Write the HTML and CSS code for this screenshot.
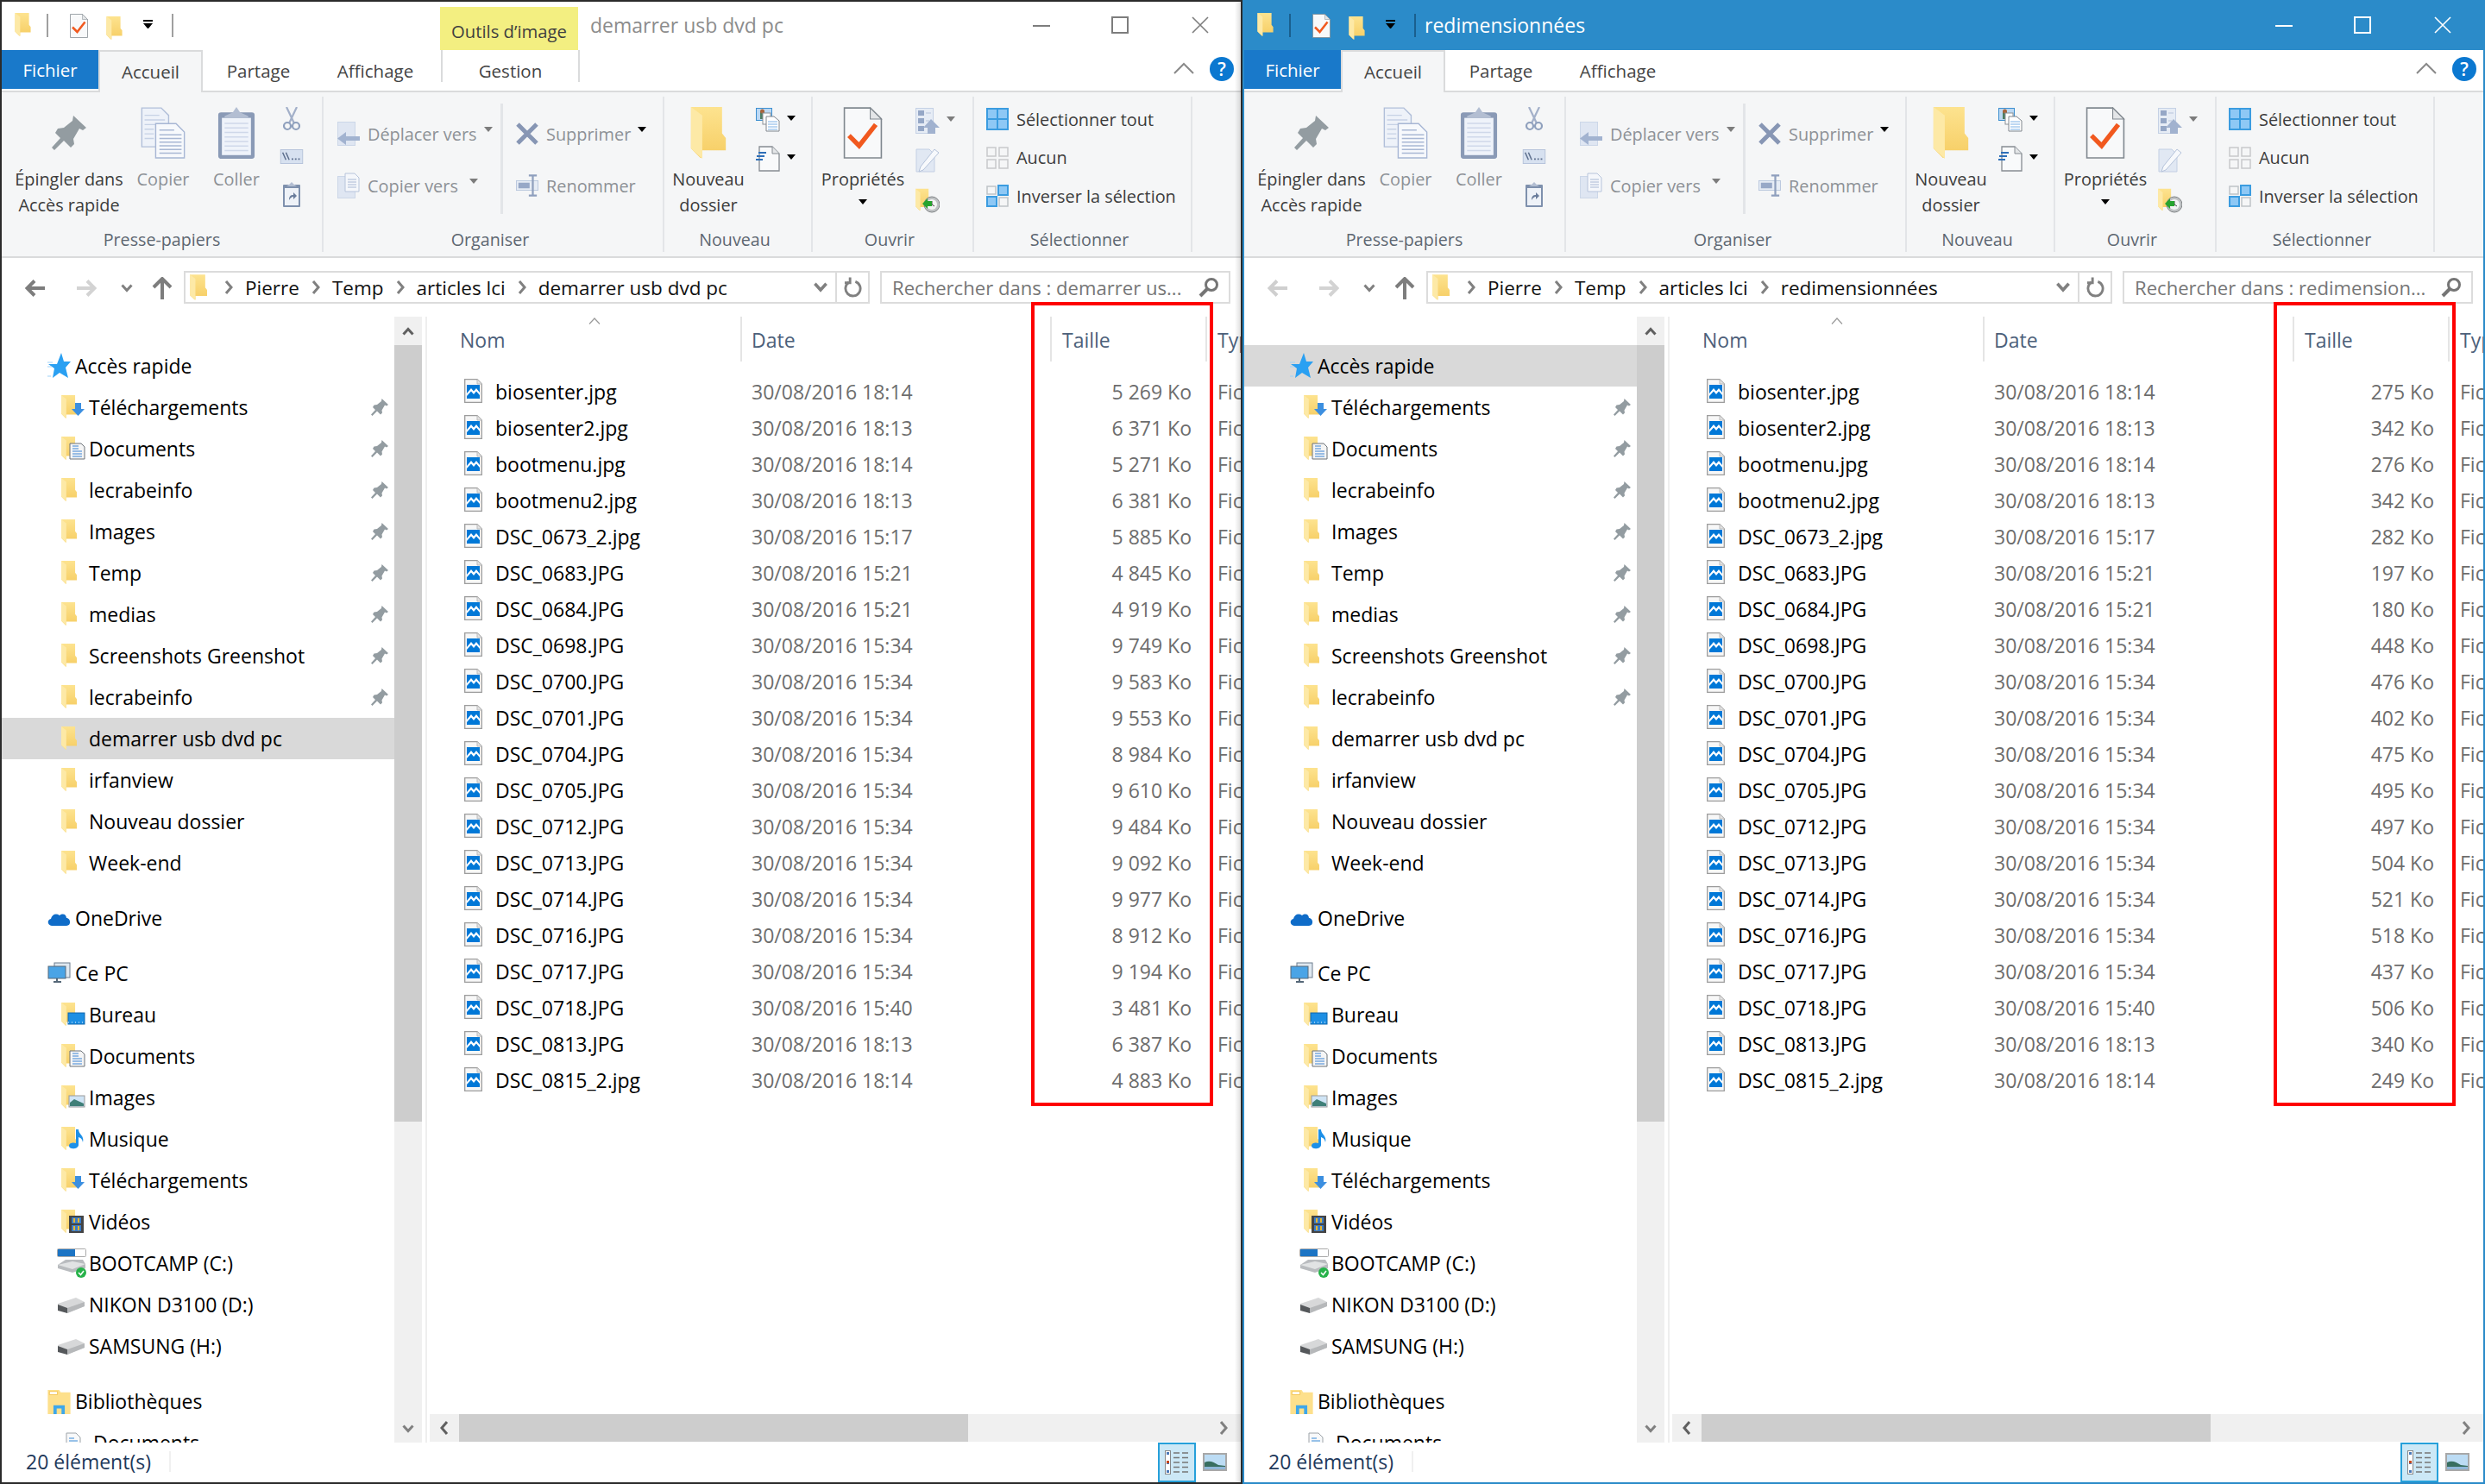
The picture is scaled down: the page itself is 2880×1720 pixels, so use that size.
FILE: index.html
```html
<!DOCTYPE html>
<html lang="fr">
<head>
<meta charset="utf-8">
<title>Explorateur</title>
<link rel="stylesheet" href="styles.css">
</head>
<body>
<svg class="defs" xmlns="http://www.w3.org/2000/svg">
<defs>
<linearGradient id="fg" x1="0" y1="0" x2="0" y2="1"><stop offset="0" stop-color="#fde38f"/><stop offset="1" stop-color="#f6cd63"/></linearGradient>
<symbol id="folder" viewBox="0 0 37 55"><path d="M0 0H33V28L37 33V46H12V54H10L0 44Z" fill="url(#fg)"/><path d="M0 0L12 9V55L0 44Z" fill="#fde9a6"/></symbol>
<symbol id="check" viewBox="0 0 42 56"><path d="M1 1H29L41 13V55H1Z" fill="#f8f9fa" stroke="#80888f" stroke-width="1.5"/><path d="M29 1V13H41Z" fill="#e4e6e8" stroke="#80888f"/><path d="M6 31L17 42L35 19" fill="none" stroke="#f1591f" stroke-width="5"/></symbol>
<symbol id="pin" viewBox="0 0 40 40"><path d="M25 0L40 14L36 17L32 15L25 27L26 33L22 37L14 29L3 40L0 37L10 26L4 20L7 15L14 14L24 6Z" fill="#939ca1"/></symbol>
<symbol id="copy" viewBox="0 0 48 56"><path d="M1 1H22L30 9V43H1Z" fill="#eef2f9" stroke="#b1bfd9" stroke-width="1.3"/><path d="M4 9H20M4 14H26M4 19H26M4 24H14M4 29H14M4 34H14" stroke="#c6d1e5" stroke-width="1.3"/><path d="M16 18H38L47 27V55H16Z" fill="#f7f9fc" stroke="#a7b6d4" stroke-width="1.3"/><path d="M20 25H36M20 30H44M20 34H44M20 38H44M20 42H44M20 46H44M20 50H44" stroke="#a9b8d4" stroke-width="1.4"/></symbol>
<symbol id="paste" viewBox="0 0 40 57"><rect x="0" y="6" width="40" height="51" rx="3" fill="#8a9ab6"/><rect x="4" y="12" width="32" height="41" fill="#eff3fa"/><path d="M7 18H33M7 23H33M7 28H33M7 33H33M7 38H33M7 43H33M7 48H33" stroke="#cfd8e9" stroke-width="1.3"/><path d="M20 0L24 6L33 10V12H7V10L16 6Z" fill="#b3bed2"/></symbol>
<symbol id="cut" viewBox="0 0 20 28"><path d="M4 0L13 19M16 0L7 19" stroke="#a3b0c9" stroke-width="2.2" fill="none"/><circle cx="5" cy="22" r="4" fill="none" stroke="#8fa0bd" stroke-width="2.2"/><circle cx="15" cy="22" r="4" fill="none" stroke="#8fa0bd" stroke-width="2.2"/></symbol>
<symbol id="cpath" viewBox="0 0 28 18"><rect x=".5" y=".5" width="27" height="17" fill="#d7e1f0" stroke="#b4c2da"/><path d="M3 4L7 13M7 4L11 13" stroke="#5d6f8d" stroke-width="1.6"/><path d="M14 12h2M18 12h2M22 12h2" stroke="#5d6f8d" stroke-width="2"/></symbol>
<symbol id="pshort" viewBox="0 0 20 29"><rect y="3" width="20" height="26" rx="1" fill="#7e90ad"/><rect x="2" y="7" width="16" height="20" fill="#eef2f8"/><path d="M10 0L13 3L16 5H4L7 3Z" fill="#b3bed2"/><path d="M7 21C7 16 9 15 12 15V12L16 16L12 20V17C10 17 9 18 7 21Z" fill="#6a7d9c"/></symbol>
<symbol id="move" viewBox="0 0 26 28"><rect x=".5" y=".5" width="20" height="27" fill="#dfe6f2" stroke="#ccd7e8"/><path d="M10 14V19H26V24H10V29L0 21.500Z" transform="translate(0 -2)" fill="#a2b3d0"/></symbol>
<symbol id="copyto" viewBox="0 0 26 30"><rect x=".5" y="4.500" width="20" height="25" fill="#dfe6f2" stroke="#ccd7e8"/><path d="M9 1H20L25 6V22H9Z" fill="#f5f7fb" stroke="#b7c4db"/><path d="M12 8H22M12 11H22M12 14H22M12 17H22" stroke="#a9b8d4"/></symbol>
<symbol id="x" viewBox="0 0 26 24"><path d="M2 1L24 23M24 1L2 23" stroke="#8796b4" stroke-width="5"/></symbol>
<symbol id="rename" viewBox="0 0 28 27"><rect x=".5" y="7.500" width="27" height="12" fill="#e6ecf5" stroke="#b8c6dd"/><rect x="3" y="10" width="14" height="7" fill="#97a8c7"/><path d="M21 2V25M16 1H26M16 26H26" stroke="#8f9fbd" stroke-width="2.400" fill="none"/></symbol>
<symbol id="newitem" viewBox="0 0 28 28"><rect x=".5" y=".5" width="18" height="14" fill="#bcd8f3" stroke="#3d8fd0"/><rect x="5" y="4" width="5" height="9" fill="#4c7d63"/><circle cx="7.500" cy="4" r="2.500" fill="#a9653c"/><rect x="8" y="6" width="9" height="13" fill="#fff" stroke="#8a8f96"/><path d="M12 10H21L27 15V27H12Z" fill="#fff" stroke="#80868d"/><path d="M14 16H25M14 19H25M14 22H25M14 25H25" stroke="#7db1e6"/></symbol>
<symbol id="easy" viewBox="0 0 28 30"><path d="M4 1H19L27 9V29H4Z" fill="#f9fafb" stroke="#868c92" stroke-width="1.300"/><path d="M19 1V9H27" fill="#e4e6e8" stroke="#868c92"/><path d="M3 8H12M1 12H10M0 16H8" stroke="#2e6fb8" stroke-width="1.800"/></symbol>
<symbol id="plist" viewBox="0 0 28 30"><rect x=".5" y=".5" width="20" height="29" fill="#e6ecf5" stroke="#c5d1e5"/><rect x="3" y="3" width="7" height="6" fill="#95a7c6"/><rect x="3" y="12" width="7" height="6" fill="#95a7c6"/><rect x="3" y="21" width="7" height="6" fill="#95a7c6"/><path d="M12 6H18M12 15H16" stroke="#b7c4db"/><path d="M18 13L28 23H23V30H14V23H9Z" fill="#a1b2cf"/></symbol>
<symbol id="edit" viewBox="0 0 28 28"><path d="M1 1H16L22 7V27H1Z" fill="#e1e8f3" stroke="#c3cfe3"/><path d="M22 1L27 5L9 25L4 27L6 21Z" fill="#f7f9fc" stroke="#b5c3da"/></symbol>
<symbol id="hist" viewBox="0 0 28 28"><use href="#folder" width="17" height="27"/><circle cx="19" cy="19" r="9" fill="#bfc2c4" stroke="#808486"/><circle cx="19" cy="19" r="6" fill="#f3f3f3"/><path d="M19 15V19L22 21" stroke="#444" fill="none"/><path d="M8 18L14 12V15H19V21H14V24Z" fill="#26a32e"/></symbol>
<symbol id="sall" viewBox="0 0 26 26"><rect x="1" y="1" width="24" height="24" fill="#8ec8f5" stroke="#3b9ce0" stroke-width="2"/><path d="M13 1V25M1 13H25" stroke="#3b9ce0" stroke-width="2"/></symbol>
<symbol id="snone" viewBox="0 0 26 26"><path d="M1 1H11V11H1ZM15 1H25V11H15ZM1 15H11V25H1ZM15 15H25V25H15Z" fill="#f5f6f7" stroke="#c7c9cb" stroke-width="1.500"/></symbol>
<symbol id="sinv" viewBox="0 0 26 26"><path d="M1 2H11V11H1ZM15 15H25V25H15Z" fill="#f5f6f7" stroke="#bfc3c7" stroke-width="1.500"/><path d="M14 1H25V12H14ZM1 14H12V25H1Z" fill="#8ec8f5" stroke="#3b9ce0" stroke-width="2"/></symbol>
<symbol id="star" viewBox="0 0 27 30"><path d="M16 0L19 10L27 10L21 17L24 29L14 23L6 29L8 18L1 13H11Z" fill="#2aa0f2"/><path d="M0 11H6M0 16H5M0 27H4" stroke="#9fd2f7"/></symbol>
<symbol id="dl" viewBox="0 0 28 28"><use href="#folder" width="18" height="27"/><path d="M12 16H16V9H23V16H27L19.500 24Z" fill="#3c8fe0"/></symbol>
<symbol id="docs" viewBox="0 0 28 28"><use href="#folder" width="18" height="27"/><path d="M10 8H23L27 12V26H10Z" fill="#f5f5f5" stroke="#6d7278"/><path d="M13 11H20M13 14H20M13 17H24M13 20H24M13 23H24" stroke="#3b83d4"/></symbol>
<symbol id="fold" viewBox="0 0 28 28"><use href="#folder" width="18" height="27"/></symbol>
<symbol id="desk" viewBox="0 0 28 28"><use href="#folder" width="18" height="27"/><rect x="8" y="12" width="19" height="13" fill="#1d8fe4" stroke="#0f67ad"/><path d="M8 23H27" stroke="#fff" stroke-dasharray="1 3"/></symbol>
<symbol id="pics" viewBox="0 0 28 28"><use href="#folder" width="18" height="27"/><rect x="9" y="12" width="18" height="13" fill="#cfe4f5" stroke="#999"/><path d="M10 20L15 16L26 21V24H10Z" fill="#3f7f78"/></symbol>
<symbol id="music" viewBox="0 0 28 28"><use href="#folder" width="18" height="27"/><path d="M17 3H20C20 9 27 10 25 18C24 13 22 13 20 12V21C20 26 9 27 9 22C9 18 15 18 17 19Z" fill="#1d90e8"/></symbol>
<symbol id="vid" viewBox="0 0 28 28"><use href="#folder" width="18" height="27"/><rect x="9" y="7" width="17" height="20" fill="#444"/><rect x="12" y="9" width="11" height="7" fill="#3a7bc6"/><rect x="12" y="18" width="11" height="7" fill="#3a7bc6"/><path d="M15 10V15M20 10V15M15 19V24M20 19V24" stroke="#e6b530" stroke-width="2"/></symbol>
<symbol id="cdrv" viewBox="0 0 34 34"><rect x=".5" y=".5" width="33" height="9" rx="1" fill="#fff" stroke="#aaa"/><rect x="1" y="1" width="20" height="8" fill="#1c74c4"/><path d="M1 19L10 13H30L33 18V23L18 28L1 23Z" fill="#b9bcbf"/><path d="M1 19L18 24L33 18L18 15Z" fill="#e1e3e4"/><circle cx="28" cy="28" r="6" fill="#27b24a"/><path d="M25 28L27.500 30.500L31 26" stroke="#fff" stroke-width="1.500" fill="none"/></symbol>
<symbol id="usb" viewBox="0 0 34 34"><path d="M1 16L22 9L32 14V19L12 27L1 22Z" fill="#d7d8d9"/><path d="M1 17V24L12 27V21Z" fill="#55585b"/><path d="M12 21L32 14V19L12 27Z" fill="#b6b8ba"/></symbol>
<symbol id="cloud" viewBox="0 0 27 18"><path d="M5 18C0 18-1 11 4 10C5 5 10 3 14 6C18 3 22 5 22 9C27 9 28 18 22 18Z" fill="#0f6cc8"/></symbol>
<symbol id="pc" viewBox="0 0 27 26"><rect x="8" y="1" width="18" height="17" fill="#dfe8f0" stroke="#6d7d8e"/><rect x="1" y="5" width="20" height="14" fill="#4aa4e6" stroke="#566878"/><path d="M7 23H16M11 19V23" stroke="#566878" stroke-width="2"/></symbol>
<symbol id="lib" viewBox="0 0 28 32"><path d="M0 2H14L16 5H28V32H0Z" fill="#fde08c"/><path d="M2 4H12V8H2Z" fill="#fff" stroke="#f3c34f"/><path d="M7 32V21H21V32H17V25H11V32Z" fill="#3ea7ea"/></symbol>
<symbol id="doc2" viewBox="0 0 18 24"><path d="M1 1H12L17 6V23H1Z" fill="#f8f9fa" stroke="#9da3a8"/><path d="M4 7H10M4 10H14M4 13H14M4 16H14" stroke="#3b8bd8"/></symbol>
<symbol id="img" viewBox="0 0 21 28"><path d="M.7.7H15L20.300 6V27.300H.7Z" fill="#f7f7f7" stroke="#9c9c9c" stroke-width="1.300"/><path d="M15 .7V6H20.300" fill="#e3e3e3" stroke="#bcbcbc"/><rect x="3" y="7" width="15" height="16" fill="#0078d7"/><path d="M3 17L8 11L11 14.500L14 11L18 16V19L14 14.500L11 18L8 14.500L3 20Z" fill="#fff"/></symbol>
<symbol id="back" viewBox="0 0 24 20"><path d="M23 10H3M11 1.500L2.500 10L11 18.500" fill="none" stroke="currentColor" stroke-width="4"/></symbol>
<symbol id="fwd" viewBox="0 0 24 20"><path d="M1 10H21M13 1.500L21.500 10L13 18.500" fill="none" stroke="currentColor" stroke-width="4"/></symbol>
<symbol id="up" viewBox="0 0 24 26"><path d="M12 26V3M2 12L12 2L22 12" fill="none" stroke="#7d7d7d" stroke-width="4"/></symbol>
<symbol id="chd" viewBox="0 0 14 10"><path d="M1.500 1.500L7 7.500L12.500 1.500" fill="none" stroke="#808080" stroke-width="3"/></symbol>
<symbol id="chr" viewBox="0 0 10 18"><path d="M2 2L8 9L2 16" fill="none" stroke="#808080" stroke-width="3"/></symbol>
<symbol id="chl" viewBox="0 0 10 18"><path d="M8 2L2 9L8 16" fill="none" stroke="#606060" stroke-width="3"/></symbol>
<symbol id="chu" viewBox="0 0 14 10"><path d="M1.500 8.500L7 2.500L12.500 8.500" fill="none" stroke="#606060" stroke-width="3"/></symbol>
<symbol id="ref" viewBox="0 0 22 24"><path d="M6 6A9 9 0 1 0 14 5" fill="none" stroke="#808080" stroke-width="3"/><path d="M6 0H9V8H1V5H6Z" fill="#808080"/></symbol>
<symbol id="mag" viewBox="0 0 24 24"><circle cx="15" cy="9" r="6.500" fill="none" stroke="#757575" stroke-width="3"/><path d="M10 14L2 22" stroke="#757575" stroke-width="4"/></symbol>
<symbol id="caret" viewBox="0 0 14 8"><path d="M1 7.500L7 1L13 7.500" fill="none" stroke="#9a9a9a" stroke-width="1.200"/></symbol>
<symbol id="vdet" viewBox="0 0 28 28"><rect x=".5" y=".5" width="6" height="27" fill="#fff" stroke="#888"/><path d="M10 3H17M20 3H27M10 8.500H17M20 8.500H27M10 14H17M20 14H27M10 19.500H17M20 19.500H27M10 25H17M20 25H27" stroke="#767676" stroke-width="1.300"/><path d="M2 2h3v3h-3zM2 13h3v3h-3zM2 23h3v3h-3z" fill="#4a78b8"/><path d="M2 12h3v3h-3z" fill="#c5461c"/></symbol>
<symbol id="vthumb" viewBox="0 0 28 21"><rect x="1" y="1" width="26" height="19" fill="#bcdcf4" stroke="#a8a8a8" stroke-width="2"/><path d="M2 11C8 8 13 11 18 14L26 15V17H2Z" fill="#386e60"/><rect x="2" y="16" width="24" height="3" fill="#8fb7d8"/></symbol>
</defs>
</svg>

<div class="screen">
<section class="win win-a">
  <header class="title">
    <svg class="q-f q-f1"><use href="#folder"/></svg><i class="q-sep"></i>
    <svg class="q-c"><use href="#check"/></svg>
    <svg class="q-f q-f2"><use href="#folder"/></svg>
    <span class="q-dd"></span><i class="q-sep q-sep2"></i>
    <div class="ctx">Outils d’image</div>
    <span class="cap">demarrer usb dvd pc</span>
    <div class="wbtns"><i class="w-min"></i><i class="w-max"></i><svg class="w-x" viewBox="0 0 20 20"><path d="M1 1L19 19M19 1L1 19" stroke="currentColor" stroke-width="1.600"/></svg></div>
  </header>
  <nav class="tabs">
    <span class="tab t-file">Fichier</span><span class="tab t-home">Accueil</span><span class="tab t-share">Partage</span><span class="tab t-view">Affichage</span>
    <span class="tab t-gest">Gestion</span>
    <svg class="collapse" viewBox="0 0 24 14"><path d="M1 13L12 2L23 13" fill="none" stroke="#8a8a8a" stroke-width="2"/></svg><span class="help">?</span>
  </nav>
  <div class="ribbon">
    <div class="grp g1"><div class="gbody">
      <div class="big b-pin"><svg class="bi"><use href="#pin" y="10" height="40"/></svg><span>Épingler dans</span><span>Accès rapide</span></div>
      <div class="big b-copy off"><svg class="bi"><use href="#copy"/></svg><span>Copier</span></div>
      <div class="big b-paste off"><svg class="bi"><use href="#paste"/></svg><span>Coller</span></div>
      <div class="smallc"><svg class="s-cut"><use href="#cut"/></svg><svg class="s-path"><use href="#cpath"/></svg><svg class="s-short"><use href="#pshort"/></svg></div>
    </div><div class="glabel">Presse-papiers</div></div>
    <div class="grp g2"><div class="gbody">
      <div class="org org-l">
        <div class="orow off"><svg class="oi"><use href="#move"/></svg><span>Déplacer vers</span><i class="arr grey"></i></div>
        <div class="orow off"><svg class="oi"><use href="#copyto"/></svg><span>Copier vers</span><i class="arr grey a-wide"></i></div>
      </div>
      <div class="org org-r">
        <div class="orow off"><svg class="oi"><use href="#x"/></svg><span>Supprimer</span><i class="arr"></i></div>
        <div class="orow off"><svg class="oi"><use href="#rename"/></svg><span>Renommer</span></div>
      </div>
    </div><div class="glabel lp">Organiser</div></div>
    <div class="grp g3"><div class="gbody">
      <div class="big b-new"><svg class="bi"><use href="#folder"/></svg><span>Nouveau</span><span>dossier</span></div>
      <div class="newc"><div class="nrow"><svg class="ni"><use href="#newitem"/></svg><i class="arr"></i></div><div class="nrow"><svg class="ni"><use href="#easy"/></svg><i class="arr"></i></div></div>
    </div><div class="glabel lp">Nouveau</div></div>
    <div class="grp g4"><div class="gbody">
      <div class="big b-prop"><svg class="bi"><use href="#check"/></svg><span>Propriétés</span><i class="arr prop-arr"></i></div>
      <div class="openc"><div class="nrow"><svg class="ni"><use href="#plist"/></svg><i class="arr grey"></i></div><div class="nrow"><svg class="ni"><use href="#edit"/></svg></div><div class="nrow"><svg class="ni"><use href="#hist"/></svg></div></div>
    </div><div class="glabel lp">Ouvrir</div></div>
    <div class="grp g5"><div class="gbody">
      <div class="selc"><div class="srow"><svg class="si"><use href="#sall"/></svg><span>Sélectionner tout</span></div><div class="srow"><svg class="si"><use href="#snone"/></svg><span>Aucun</span></div><div class="srow"><svg class="si"><use href="#sinv"/></svg><span>Inverser la sélection</span></div></div>
    </div><div class="glabel lp">Sélectionner</div></div>
  </div>
  <div class="addr">
    <svg class="n-back"><use href="#back"/></svg><svg class="n-fwd"><use href="#fwd"/></svg><svg class="n-dd"><use href="#chd"/></svg><svg class="n-up"><use href="#up"/></svg>
    <div class="abox">
      <svg class="a-f"><use href="#folder"/></svg><svg class="a-c"><use href="#chr"/></svg><span>Pierre</span><svg class="a-c"><use href="#chr"/></svg><span>Temp</span><svg class="a-c"><use href="#chr"/></svg><span>articles lci</span><svg class="a-c"><use href="#chr"/></svg><span>demarrer usb dvd pc</span>
      <svg class="a-dd"><use href="#chd"/></svg><div class="a-ref"><svg><use href="#ref"/></svg></div>
    </div>
    <div class="sbox"><span>Rechercher dans : demarrer us...</span><svg><use href="#mag"/></svg></div>
  </div>
  <div class="main">
    <aside class="navp">
      <div class="ni1"><svg class="ic1"><use href="#star"/></svg>Accès rapide</div>
      <div class="ni2"><svg class="ic2"><use href="#dl"/></svg>Téléchargements<svg class="pn"><use href="#pin"/></svg></div>
      <div class="ni2"><svg class="ic2"><use href="#docs"/></svg>Documents<svg class="pn"><use href="#pin"/></svg></div>
      <div class="ni2"><svg class="ic2"><use href="#fold"/></svg>lecrabeinfo<svg class="pn"><use href="#pin"/></svg></div>
      <div class="ni2"><svg class="ic2"><use href="#fold"/></svg>Images<svg class="pn"><use href="#pin"/></svg></div>
      <div class="ni2"><svg class="ic2"><use href="#fold"/></svg>Temp<svg class="pn"><use href="#pin"/></svg></div>
      <div class="ni2"><svg class="ic2"><use href="#fold"/></svg>medias<svg class="pn"><use href="#pin"/></svg></div>
      <div class="ni2"><svg class="ic2"><use href="#fold"/></svg>Screenshots Greenshot<svg class="pn"><use href="#pin"/></svg></div>
      <div class="ni2"><svg class="ic2"><use href="#fold"/></svg>lecrabeinfo<svg class="pn"><use href="#pin"/></svg></div>
      <div class="ni2 sel"><svg class="ic2"><use href="#fold"/></svg>demarrer usb dvd pc</div>
      <div class="ni2"><svg class="ic2"><use href="#fold"/></svg>irfanview</div>
      <div class="ni2"><svg class="ic2"><use href="#fold"/></svg>Nouveau dossier</div>
      <div class="ni2"><svg class="ic2"><use href="#fold"/></svg>Week-end</div>
      <div class="ni1 top"><svg class="ic1 ic-cloud"><use href="#cloud"/></svg>OneDrive</div>
      <div class="ni1 top"><svg class="ic1"><use href="#pc"/></svg>Ce PC</div>
      <div class="ni2"><svg class="ic2"><use href="#desk"/></svg>Bureau</div>
      <div class="ni2"><svg class="ic2"><use href="#docs"/></svg>Documents</div>
      <div class="ni2"><svg class="ic2"><use href="#pics"/></svg>Images</div>
      <div class="ni2"><svg class="ic2"><use href="#music"/></svg>Musique</div>
      <div class="ni2"><svg class="ic2"><use href="#dl"/></svg>Téléchargements</div>
      <div class="ni2"><svg class="ic2"><use href="#vid"/></svg>Vidéos</div>
      <div class="ni2"><svg class="ic3"><use href="#cdrv"/></svg>BOOTCAMP (C:)</div>
      <div class="ni2"><svg class="ic3"><use href="#usb"/></svg>NIKON D3100 (D:)</div>
      <div class="ni2"><svg class="ic3"><use href="#usb"/></svg>SAMSUNG (H:)</div>
      <div class="ni1 top"><svg class="ic1"><use href="#lib"/></svg>Bibliothèques</div>
      <div class="ni2"><svg class="ic2 ic-d"><use href="#doc2"/></svg>Documents</div>
    </aside>
    <div class="vsb"><div class="sb-btn"><svg><use href="#chu"/></svg></div><div class="sb-thumb"></div><div class="sb-rest"></div><div class="sb-btn"><svg><use href="#chd"/></svg></div></div>
    <div class="files">
      <div class="fhead"><div class="hc hc-n">Nom<svg class="sort"><use href="#caret"/></svg></div><div class="hc hc-d">Date</div><div class="hc hc-s">Taille</div><div class="hc hc-t">Type</div></div>
      <div class="flist">
        <div class="fr"><div class="fn"><svg><use href="#img"/></svg>biosenter.jpg</div><div class="fd">30/08/2016 18:14</div><div class="fs">5 269 Ko</div><div class="ft">Fichier JPG</div></div>
        <div class="fr"><div class="fn"><svg><use href="#img"/></svg>biosenter2.jpg</div><div class="fd">30/08/2016 18:13</div><div class="fs">6 371 Ko</div><div class="ft">Fichier JPG</div></div>
        <div class="fr"><div class="fn"><svg><use href="#img"/></svg>bootmenu.jpg</div><div class="fd">30/08/2016 18:14</div><div class="fs">5 271 Ko</div><div class="ft">Fichier JPG</div></div>
        <div class="fr"><div class="fn"><svg><use href="#img"/></svg>bootmenu2.jpg</div><div class="fd">30/08/2016 18:13</div><div class="fs">6 381 Ko</div><div class="ft">Fichier JPG</div></div>
        <div class="fr"><div class="fn"><svg><use href="#img"/></svg>DSC_0673_2.jpg</div><div class="fd">30/08/2016 15:17</div><div class="fs">5 885 Ko</div><div class="ft">Fichier JPG</div></div>
        <div class="fr"><div class="fn"><svg><use href="#img"/></svg>DSC_0683.JPG</div><div class="fd">30/08/2016 15:21</div><div class="fs">4 845 Ko</div><div class="ft">Fichier JPG</div></div>
        <div class="fr"><div class="fn"><svg><use href="#img"/></svg>DSC_0684.JPG</div><div class="fd">30/08/2016 15:21</div><div class="fs">4 919 Ko</div><div class="ft">Fichier JPG</div></div>
        <div class="fr"><div class="fn"><svg><use href="#img"/></svg>DSC_0698.JPG</div><div class="fd">30/08/2016 15:34</div><div class="fs">9 749 Ko</div><div class="ft">Fichier JPG</div></div>
        <div class="fr"><div class="fn"><svg><use href="#img"/></svg>DSC_0700.JPG</div><div class="fd">30/08/2016 15:34</div><div class="fs">9 583 Ko</div><div class="ft">Fichier JPG</div></div>
        <div class="fr"><div class="fn"><svg><use href="#img"/></svg>DSC_0701.JPG</div><div class="fd">30/08/2016 15:34</div><div class="fs">9 553 Ko</div><div class="ft">Fichier JPG</div></div>
        <div class="fr"><div class="fn"><svg><use href="#img"/></svg>DSC_0704.JPG</div><div class="fd">30/08/2016 15:34</div><div class="fs">8 984 Ko</div><div class="ft">Fichier JPG</div></div>
        <div class="fr"><div class="fn"><svg><use href="#img"/></svg>DSC_0705.JPG</div><div class="fd">30/08/2016 15:34</div><div class="fs">9 610 Ko</div><div class="ft">Fichier JPG</div></div>
        <div class="fr"><div class="fn"><svg><use href="#img"/></svg>DSC_0712.JPG</div><div class="fd">30/08/2016 15:34</div><div class="fs">9 484 Ko</div><div class="ft">Fichier JPG</div></div>
        <div class="fr"><div class="fn"><svg><use href="#img"/></svg>DSC_0713.JPG</div><div class="fd">30/08/2016 15:34</div><div class="fs">9 092 Ko</div><div class="ft">Fichier JPG</div></div>
        <div class="fr"><div class="fn"><svg><use href="#img"/></svg>DSC_0714.JPG</div><div class="fd">30/08/2016 15:34</div><div class="fs">9 977 Ko</div><div class="ft">Fichier JPG</div></div>
        <div class="fr"><div class="fn"><svg><use href="#img"/></svg>DSC_0716.JPG</div><div class="fd">30/08/2016 15:34</div><div class="fs">8 912 Ko</div><div class="ft">Fichier JPG</div></div>
        <div class="fr"><div class="fn"><svg><use href="#img"/></svg>DSC_0717.JPG</div><div class="fd">30/08/2016 15:34</div><div class="fs">9 194 Ko</div><div class="ft">Fichier JPG</div></div>
        <div class="fr"><div class="fn"><svg><use href="#img"/></svg>DSC_0718.JPG</div><div class="fd">30/08/2016 15:40</div><div class="fs">3 481 Ko</div><div class="ft">Fichier JPG</div></div>
        <div class="fr"><div class="fn"><svg><use href="#img"/></svg>DSC_0813.JPG</div><div class="fd">30/08/2016 18:13</div><div class="fs">6 387 Ko</div><div class="ft">Fichier JPG</div></div>
        <div class="fr"><div class="fn"><svg><use href="#img"/></svg>DSC_0815_2.jpg</div><div class="fd">30/08/2016 18:14</div><div class="fs">4 883 Ko</div><div class="ft">Fichier JPG</div></div>
      </div>
      <div class="hsb"><div class="hb"><svg><use href="#chl"/></svg></div><div class="h-thumb"></div><div class="hb hb-r"><svg><use href="#chr"/></svg></div></div>
    </div>
  </div>
  <footer class="status"><span class="count">20 élément(s)</span><i class="st-sep"></i><div class="vbtn on"><svg><use href="#vdet"/></svg></div><div class="vbtn v2"><svg class="vt"><use href="#vthumb"/></svg></div></footer>
  <div class="redbox"></div>
</section>

<section class="win win-b">
  <header class="title">
    <svg class="q-f q-f1"><use href="#folder"/></svg><i class="q-sep"></i>
    <svg class="q-c"><use href="#check"/></svg>
    <svg class="q-f q-f2"><use href="#folder"/></svg>
    <span class="q-dd"></span><i class="q-sep q-sep2"></i>
    <span class="cap">redimensionnées</span>
    <div class="wbtns"><i class="w-min"></i><i class="w-max"></i><svg class="w-x" viewBox="0 0 20 20"><path d="M1 1L19 19M19 1L1 19" stroke="currentColor" stroke-width="1.600"/></svg></div>
  </header>
  <nav class="tabs">
    <span class="tab t-file">Fichier</span><span class="tab t-home">Accueil</span><span class="tab t-share">Partage</span><span class="tab t-view">Affichage</span>
    <svg class="collapse" viewBox="0 0 24 14"><path d="M1 13L12 2L23 13" fill="none" stroke="#8a8a8a" stroke-width="2"/></svg><span class="help">?</span>
  </nav>
  <div class="ribbon">
    <div class="grp g1"><div class="gbody">
      <div class="big b-pin"><svg class="bi"><use href="#pin" y="10" height="40"/></svg><span>Épingler dans</span><span>Accès rapide</span></div>
      <div class="big b-copy off"><svg class="bi"><use href="#copy"/></svg><span>Copier</span></div>
      <div class="big b-paste off"><svg class="bi"><use href="#paste"/></svg><span>Coller</span></div>
      <div class="smallc"><svg class="s-cut"><use href="#cut"/></svg><svg class="s-path"><use href="#cpath"/></svg><svg class="s-short"><use href="#pshort"/></svg></div>
    </div><div class="glabel">Presse-papiers</div></div>
    <div class="grp g2"><div class="gbody">
      <div class="org org-l">
        <div class="orow off"><svg class="oi"><use href="#move"/></svg><span>Déplacer vers</span><i class="arr grey"></i></div>
        <div class="orow off"><svg class="oi"><use href="#copyto"/></svg><span>Copier vers</span><i class="arr grey a-wide"></i></div>
      </div>
      <div class="org org-r">
        <div class="orow off"><svg class="oi"><use href="#x"/></svg><span>Supprimer</span><i class="arr"></i></div>
        <div class="orow off"><svg class="oi"><use href="#rename"/></svg><span>Renommer</span></div>
      </div>
    </div><div class="glabel lp">Organiser</div></div>
    <div class="grp g3"><div class="gbody">
      <div class="big b-new"><svg class="bi"><use href="#folder"/></svg><span>Nouveau</span><span>dossier</span></div>
      <div class="newc"><div class="nrow"><svg class="ni"><use href="#newitem"/></svg><i class="arr"></i></div><div class="nrow"><svg class="ni"><use href="#easy"/></svg><i class="arr"></i></div></div>
    </div><div class="glabel lp">Nouveau</div></div>
    <div class="grp g4"><div class="gbody">
      <div class="big b-prop"><svg class="bi"><use href="#check"/></svg><span>Propriétés</span><i class="arr prop-arr"></i></div>
      <div class="openc"><div class="nrow"><svg class="ni"><use href="#plist"/></svg><i class="arr grey"></i></div><div class="nrow"><svg class="ni"><use href="#edit"/></svg></div><div class="nrow"><svg class="ni"><use href="#hist"/></svg></div></div>
    </div><div class="glabel lp">Ouvrir</div></div>
    <div class="grp g5"><div class="gbody">
      <div class="selc"><div class="srow"><svg class="si"><use href="#sall"/></svg><span>Sélectionner tout</span></div><div class="srow"><svg class="si"><use href="#snone"/></svg><span>Aucun</span></div><div class="srow"><svg class="si"><use href="#sinv"/></svg><span>Inverser la sélection</span></div></div>
    </div><div class="glabel lp">Sélectionner</div></div>
  </div>
  <div class="addr">
    <svg class="n-back"><use href="#back"/></svg><svg class="n-fwd"><use href="#fwd"/></svg><svg class="n-dd"><use href="#chd"/></svg><svg class="n-up"><use href="#up"/></svg>
    <div class="abox">
      <svg class="a-f"><use href="#folder"/></svg><svg class="a-c"><use href="#chr"/></svg><span>Pierre</span><svg class="a-c"><use href="#chr"/></svg><span>Temp</span><svg class="a-c"><use href="#chr"/></svg><span>articles lci</span><svg class="a-c"><use href="#chr"/></svg><span>redimensionnées</span>
      <svg class="a-dd"><use href="#chd"/></svg><div class="a-ref"><svg><use href="#ref"/></svg></div>
    </div>
    <div class="sbox"><span>Rechercher dans : redimension...</span><svg><use href="#mag"/></svg></div>
  </div>
  <div class="main">
    <aside class="navp">
      <div class="ni1 sel"><svg class="ic1"><use href="#star"/></svg>Accès rapide</div>
      <div class="ni2"><svg class="ic2"><use href="#dl"/></svg>Téléchargements<svg class="pn"><use href="#pin"/></svg></div>
      <div class="ni2"><svg class="ic2"><use href="#docs"/></svg>Documents<svg class="pn"><use href="#pin"/></svg></div>
      <div class="ni2"><svg class="ic2"><use href="#fold"/></svg>lecrabeinfo<svg class="pn"><use href="#pin"/></svg></div>
      <div class="ni2"><svg class="ic2"><use href="#fold"/></svg>Images<svg class="pn"><use href="#pin"/></svg></div>
      <div class="ni2"><svg class="ic2"><use href="#fold"/></svg>Temp<svg class="pn"><use href="#pin"/></svg></div>
      <div class="ni2"><svg class="ic2"><use href="#fold"/></svg>medias<svg class="pn"><use href="#pin"/></svg></div>
      <div class="ni2"><svg class="ic2"><use href="#fold"/></svg>Screenshots Greenshot<svg class="pn"><use href="#pin"/></svg></div>
      <div class="ni2"><svg class="ic2"><use href="#fold"/></svg>lecrabeinfo<svg class="pn"><use href="#pin"/></svg></div>
      <div class="ni2"><svg class="ic2"><use href="#fold"/></svg>demarrer usb dvd pc</div>
      <div class="ni2"><svg class="ic2"><use href="#fold"/></svg>irfanview</div>
      <div class="ni2"><svg class="ic2"><use href="#fold"/></svg>Nouveau dossier</div>
      <div class="ni2"><svg class="ic2"><use href="#fold"/></svg>Week-end</div>
      <div class="ni1 top"><svg class="ic1 ic-cloud"><use href="#cloud"/></svg>OneDrive</div>
      <div class="ni1 top"><svg class="ic1"><use href="#pc"/></svg>Ce PC</div>
      <div class="ni2"><svg class="ic2"><use href="#desk"/></svg>Bureau</div>
      <div class="ni2"><svg class="ic2"><use href="#docs"/></svg>Documents</div>
      <div class="ni2"><svg class="ic2"><use href="#pics"/></svg>Images</div>
      <div class="ni2"><svg class="ic2"><use href="#music"/></svg>Musique</div>
      <div class="ni2"><svg class="ic2"><use href="#dl"/></svg>Téléchargements</div>
      <div class="ni2"><svg class="ic2"><use href="#vid"/></svg>Vidéos</div>
      <div class="ni2"><svg class="ic3"><use href="#cdrv"/></svg>BOOTCAMP (C:)</div>
      <div class="ni2"><svg class="ic3"><use href="#usb"/></svg>NIKON D3100 (D:)</div>
      <div class="ni2"><svg class="ic3"><use href="#usb"/></svg>SAMSUNG (H:)</div>
      <div class="ni1 top"><svg class="ic1"><use href="#lib"/></svg>Bibliothèques</div>
      <div class="ni2"><svg class="ic2 ic-d"><use href="#doc2"/></svg>Documents</div>
    </aside>
    <div class="vsb"><div class="sb-btn"><svg><use href="#chu"/></svg></div><div class="sb-thumb"></div><div class="sb-rest"></div><div class="sb-btn"><svg><use href="#chd"/></svg></div></div>
    <div class="files">
      <div class="fhead"><div class="hc hc-n">Nom<svg class="sort"><use href="#caret"/></svg></div><div class="hc hc-d">Date</div><div class="hc hc-s">Taille</div><div class="hc hc-t">Type</div></div>
      <div class="flist">
        <div class="fr"><div class="fn"><svg><use href="#img"/></svg>biosenter.jpg</div><div class="fd">30/08/2016 18:14</div><div class="fs">275 Ko</div><div class="ft">Fichier JPG</div></div>
        <div class="fr"><div class="fn"><svg><use href="#img"/></svg>biosenter2.jpg</div><div class="fd">30/08/2016 18:13</div><div class="fs">342 Ko</div><div class="ft">Fichier JPG</div></div>
        <div class="fr"><div class="fn"><svg><use href="#img"/></svg>bootmenu.jpg</div><div class="fd">30/08/2016 18:14</div><div class="fs">276 Ko</div><div class="ft">Fichier JPG</div></div>
        <div class="fr"><div class="fn"><svg><use href="#img"/></svg>bootmenu2.jpg</div><div class="fd">30/08/2016 18:13</div><div class="fs">342 Ko</div><div class="ft">Fichier JPG</div></div>
        <div class="fr"><div class="fn"><svg><use href="#img"/></svg>DSC_0673_2.jpg</div><div class="fd">30/08/2016 15:17</div><div class="fs">282 Ko</div><div class="ft">Fichier JPG</div></div>
        <div class="fr"><div class="fn"><svg><use href="#img"/></svg>DSC_0683.JPG</div><div class="fd">30/08/2016 15:21</div><div class="fs">197 Ko</div><div class="ft">Fichier JPG</div></div>
        <div class="fr"><div class="fn"><svg><use href="#img"/></svg>DSC_0684.JPG</div><div class="fd">30/08/2016 15:21</div><div class="fs">180 Ko</div><div class="ft">Fichier JPG</div></div>
        <div class="fr"><div class="fn"><svg><use href="#img"/></svg>DSC_0698.JPG</div><div class="fd">30/08/2016 15:34</div><div class="fs">448 Ko</div><div class="ft">Fichier JPG</div></div>
        <div class="fr"><div class="fn"><svg><use href="#img"/></svg>DSC_0700.JPG</div><div class="fd">30/08/2016 15:34</div><div class="fs">476 Ko</div><div class="ft">Fichier JPG</div></div>
        <div class="fr"><div class="fn"><svg><use href="#img"/></svg>DSC_0701.JPG</div><div class="fd">30/08/2016 15:34</div><div class="fs">402 Ko</div><div class="ft">Fichier JPG</div></div>
        <div class="fr"><div class="fn"><svg><use href="#img"/></svg>DSC_0704.JPG</div><div class="fd">30/08/2016 15:34</div><div class="fs">475 Ko</div><div class="ft">Fichier JPG</div></div>
        <div class="fr"><div class="fn"><svg><use href="#img"/></svg>DSC_0705.JPG</div><div class="fd">30/08/2016 15:34</div><div class="fs">495 Ko</div><div class="ft">Fichier JPG</div></div>
        <div class="fr"><div class="fn"><svg><use href="#img"/></svg>DSC_0712.JPG</div><div class="fd">30/08/2016 15:34</div><div class="fs">497 Ko</div><div class="ft">Fichier JPG</div></div>
        <div class="fr"><div class="fn"><svg><use href="#img"/></svg>DSC_0713.JPG</div><div class="fd">30/08/2016 15:34</div><div class="fs">504 Ko</div><div class="ft">Fichier JPG</div></div>
        <div class="fr"><div class="fn"><svg><use href="#img"/></svg>DSC_0714.JPG</div><div class="fd">30/08/2016 15:34</div><div class="fs">521 Ko</div><div class="ft">Fichier JPG</div></div>
        <div class="fr"><div class="fn"><svg><use href="#img"/></svg>DSC_0716.JPG</div><div class="fd">30/08/2016 15:34</div><div class="fs">518 Ko</div><div class="ft">Fichier JPG</div></div>
        <div class="fr"><div class="fn"><svg><use href="#img"/></svg>DSC_0717.JPG</div><div class="fd">30/08/2016 15:34</div><div class="fs">437 Ko</div><div class="ft">Fichier JPG</div></div>
        <div class="fr"><div class="fn"><svg><use href="#img"/></svg>DSC_0718.JPG</div><div class="fd">30/08/2016 15:40</div><div class="fs">506 Ko</div><div class="ft">Fichier JPG</div></div>
        <div class="fr"><div class="fn"><svg><use href="#img"/></svg>DSC_0813.JPG</div><div class="fd">30/08/2016 18:13</div><div class="fs">340 Ko</div><div class="ft">Fichier JPG</div></div>
        <div class="fr"><div class="fn"><svg><use href="#img"/></svg>DSC_0815_2.jpg</div><div class="fd">30/08/2016 18:14</div><div class="fs">249 Ko</div><div class="ft">Fichier JPG</div></div>
      </div>
      <div class="hsb"><div class="hb"><svg><use href="#chl"/></svg></div><div class="h-thumb"></div><div class="hb hb-r"><svg><use href="#chr"/></svg></div></div>
    </div>
  </div>
  <footer class="status"><span class="count">20 élément(s)</span><i class="st-sep"></i><div class="vbtn on"><svg><use href="#vdet"/></svg></div><div class="vbtn v2"><svg class="vt"><use href="#vthumb"/></svg></div></footer>
  <div class="redbox"></div>
</section>
</div>
</body>
</html>
```

FILE: styles.css
```css
* { box-sizing: border-box; }
html, body { margin: 0; padding: 0; }
body { width: 2880px; height: 1720px; overflow: hidden; background: #fff; font-family: "Open Sans", "Noto Sans", sans-serif; font-size: 23px; color: #000; }
i { display: block; }
svg { display: block; flex: none; }
.defs { width: 0; height: 0; }
.screen { display: flex; width: 2880px; height: 1720px; }

.win { position: relative; width: 1440px; height: 1720px; border: 2px solid #2b2b2b; background: #fff; display: flex; flex-direction: column; overflow: hidden; }
.win-b { border-color: #2b8bc9; }
.win-a::after { content: ""; position: absolute; top: 0; bottom: 0; right: 0; width: 7px; background: linear-gradient(90deg, rgba(0,0,0,0), rgba(0,0,0,.13)); }

/* title bar */
.title { height: 56px; flex: none; display: flex; align-items: center; padding-left: 15px; background: #fff; color: #8c8c8c; }
.win-b .title { background: #2b8bc9; color: #fff; }
.q-f { width: 19px; height: 27px; }
.q-f2 { margin-left: 21px; margin-top: 4px; }
.q-f1 { margin-top: -4px; }
.q-sep { width: 2px; height: 27px; margin-left: 18px; background: #a0a0a0; margin-top: -2px; }
.win-b .q-sep { background: #1a5f8e; }
.q-sep2 { margin-left: 22px; }
.q-c { width: 21px; height: 28px; margin-left: 25px; }
.q-dd { width: 11px; height: 10px; margin-left: 24px; border-top: 2px solid #000; position: relative; margin-top: -4px; }
.q-dd::after { content: ""; display: block; margin-top: 2px; border-left: 5.5px solid transparent; border-right: 5.5px solid transparent; border-top: 6px solid #000; }
.ctx { align-self: flex-end; width: 160px; height: 50px; margin-left: 309px; background: #f3ef81; color: #3f3f3f; display: flex; align-items: center; justify-content: center; padding-top: 5px; font-size: 20.300px; }
.cap { margin-left: 14px; margin-top: -2px; }
.win-b .cap { margin-left: 10px; }
.wbtns { margin-left: auto; display: flex; align-items: center; padding-right: 37px; margin-top: -2px; color: #7d7d7d; }
.win-b .wbtns { color: #fff; }
.w-min { width: 20px; height: 2px; background: currentColor; margin-top: 2px; }
.w-max { width: 20px; height: 20px; border: 2px solid currentColor; margin: 0 73px 0 71px; }
.w-x { width: 20px; height: 20px; }

/* tabs */
.tabs { height: 49px; flex: none; display: flex; align-items: stretch; border-bottom: 2px solid #dadbdc; background: #fff; color: #444; }
.tab { display: flex; align-items: center; justify-content: center; font-size: 20.500px; }
.t-file { width: 112px; background: #1979ca; color: #fff; margin-bottom: 2px; }
.t-home { width: 121px; height: 49px; background: #f5f6f7; border: 2px solid #dadbdc; border-bottom: 0; padding-bottom: 2px; }
.t-share { width: 129px; }
.t-view { width: 142px; }
.t-gest { width: 161px; height: 37px; margin-left: 5px; border-left: 2px solid #dadbdc; border-right: 2px solid #dadbdc; padding-top: 10px; }
.collapse { width: 24px; height: 14px; align-self: center; margin-left: auto; margin-right: 18px; margin-top: -5px; }
.help { width: 28px; height: 28px; border-radius: 50%; background: #0b78d0; color: #fff; align-self: center; display: flex; align-items: center; justify-content: center; font-size: 21px; margin-right: 8px; margin-top: -4px; font-weight: 600; }

/* ribbon */
.ribbon { height: 192px; flex: none; display: flex; padding: 5px 0 6px; background: #f5f6f7; border-bottom: 2px solid #dadbdc; color: #3c3c3c; }
.grp { height: 180px; border-right: 2px solid #e3e5e8; display: flex; flex-direction: column; }
.g1 { width: 373px; } .g2 { width: 395px; } .g3 { width: 172px; } .g4 { width: 187px; } .g5 { width: 253px; }
.gbody { flex: 1; display: flex; min-height: 0; }
.glabel { height: 26px; line-height: 24px; text-align: center; color: #5d6671; font-size: 19.700px; }
.lp { padding-right: 7px; }
.off { color: #8d9196; }

.big { display: flex; flex-direction: column; align-items: center; line-height: 30px; white-space: nowrap; font-size: 19.900px; }
.bi { width: 100%; height: 60px; margin: 12px 0 9px; }
.b-pin { width: 130px; margin-left: 13px; }
.b-copy { width: 88px; }
.b-paste { width: 82px; }
.smallc { width: 46px; display: flex; flex-direction: column; align-items: center; padding-top: 12px; gap: 21px; }
.s-cut { width: 20px; height: 28px; }
.s-path { width: 28px; height: 17px; }
.s-short { width: 20px; height: 29px; }

.org { height: 128px; margin-top: 8px; padding-top: 5px; }
.org-l { width: 208px; border-right: 3px solid #e3e5e8; padding-left: 16px; }
.org-r { padding-left: 15px; }
.orow { height: 60px; display: flex; align-items: center; white-space: nowrap; font-size: 19.900px; }
.oi { width: 26px; height: 30px; margin-right: 9px; }
.arr { width: 0; height: 0; border-left: 5.5px solid transparent; border-right: 5.5px solid transparent; border-top: 6px solid #000; margin-left: 8px; margin-bottom: 10px; }
.arr.grey { border-top-color: #7c7c7c; }
.a-wide { margin-left: 13px; }
.b-new { width: 102px; }
.newc { padding: 12px 0 0 4px; display: flex; flex-direction: column; gap: 15px; }
.nrow { height: 30px; display: flex; align-items: center; }
.ni { width: 28px; height: 30px; }
.nrow .arr { margin-left: 8px; margin-bottom: 4px; }
.b-prop { width: 116px; }
.prop-arr { margin: 8px 0 0; }
.openc { padding: 13px 0 0 3px; display: flex; flex-direction: column; gap: 16px; }
.selc { padding: 4px 0 0 14px; }
.srow { height: 44.500px; display: flex; align-items: center; white-space: nowrap; font-size: 19.900px; }
.si { width: 26px; height: 26px; margin-right: 9px; }

/* address */
.addr { height: 68px; flex: none; display: flex; align-items: flex-start; padding: 15px 0 0 27px; }
.addr > svg { margin-top: 10px; }
.n-back { width: 24px; height: 20px; color: #7d7d7d; }
.win-b .n-back { color: #cfcfcf; }
.n-fwd { width: 24px; height: 20px; margin-left: 35px; color: #d3d3d3; }
.n-dd { width: 14px; height: 10px; margin-left: 28px; margin-top: 15px !important; }
.n-up { width: 24px; height: 26px; margin-left: 22px; margin-top: 7px !important; }
.abox { width: 795px; height: 38px; margin-left: 13px; border: 2px solid #dcdcdc; display: flex; align-items: center; gap: 14px; padding-left: 5px; color: #111; font-size: 22.500px; }
.a-f { width: 20px; height: 30px; margin-right: 6px; }
.a-c { width: 10px; height: 18px; }
.a-c:first-of-type { margin-right: 1px; }
.a-dd { width: 18px; height: 12px; margin-left: auto; margin-right: -6px; }
.a-ref { width: 38px; height: 100%; border-left: 2px solid #dcdcdc; display: flex; align-items: center; justify-content: center; }
.a-ref svg { width: 21px; height: 24px; }
.sbox { width: 406px; height: 38px; margin-left: 12px; border: 2px solid #dcdcdc; display: flex; align-items: center; justify-content: space-between; padding: 0 11px 0 12px; color: #767676; font-size: 22.100px; white-space: nowrap; overflow: hidden; }
.sbox svg { width: 24px; height: 24px; }

/* main area */
.main { flex: 1; display: flex; min-height: 0; height: 1305px; }
.navp { width: 455px; flex: none; padding-top: 33px; overflow: hidden; height: 1305px; white-space: nowrap; }
.ni1, .ni2 { height: 48px; display: flex; align-items: center; padding-right: 7px; }
.ni1 { padding-left: 53px; }
.ni2 { padding-left: 69px; }
.sel { background: #d9d9d9; }
.top { margin-top: 16px; }
.ic1 { width: 27px; height: 30px; margin-right: 5px; }
.ic-cloud { height: 18px; }
.ic2 { width: 28px; height: 28px; margin-right: 4px; }
.ic-d { width: 18px; height: 24px; margin: 0 14px 0 5px; }
.ic3 { width: 34px; height: 34px; margin: 0 3px 0 -5px; }
.pn { width: 20px; height: 20px; margin-left: auto; }

.vsb { width: 32px; flex: none; display: flex; flex-direction: column; background: #f0f0f0; height: 1305px; }
.sb-btn { height: 33px; display: flex; align-items: center; justify-content: center; }
.sb-btn svg { width: 14px; height: 10px; }
.sb-thumb { height: 900px; background: #cdcdcd; }
.sb-rest { flex: 1; }

.files { flex: 1; min-width: 0; margin-left: 4px; border-left: 2px solid #eee; display: flex; flex-direction: column; height: 1305px; overflow: hidden; }
.fhead, .fr { display: grid; grid-template-columns: 365px 359px 180px 1fr; }
.fhead { height: 52px; color: #4c607a; flex: none; }
.hc { display: flex; align-items: center; border-right: 2px solid #e5e5e5; white-space: nowrap; overflow: hidden; position: relative; padding-top: 2px; }
.hc-n { padding-left: 38px; }
.hc-d { padding-left: 11px; }
.hc-s { padding-left: 12px; }
.hc-t { padding-left: 12px; border-right: 0; }
.sort { position: absolute; top: 1px; left: 187px; width: 14px; height: 8px; }
.flist { flex: 1; padding-top: 14px; min-height: 0; }
.fr { height: 42px; align-items: center; white-space: nowrap; }
.fn { display: flex; align-items: center; padding-left: 43px; }
.fn svg { width: 21px; height: 28px; margin-right: 15px; margin-top: -2px; }
.fd { padding-left: 11px; color: #6d6d6d; }
.fs { padding-right: 18px; text-align: right; color: #6d6d6d; }
.ft { padding-left: 12px; color: #6d6d6d; overflow: hidden; }

.hsb { height: 32px; flex: none; margin: 0 0 1px 3px; display: flex; background: #f0f0f0; }
.hb { width: 34px; display: flex; align-items: center; justify-content: center; }
.hb svg { width: 10px; height: 18px; }
.hb-r { margin-left: auto; padding-right: 6px; }
.h-thumb { width: 590px; background: #cdcdcd; }

/* status */
.status { height: 46px; flex: none; display: flex; align-items: center; color: #1e395b; padding: 0 12px 2px 28px; }
.count { width: 166px; font-size: 23px; }
.st-sep { width: 2px; height: 24px; background: #f0f0f0; }
.vbtn { width: 44px; height: 46px; display: flex; align-items: center; justify-content: center; border: 2px solid transparent; }
.vbtn.on { margin-left: auto; background: #cce8f6; border-color: #26a0da; margin-bottom: -2px; }
.vbtn svg { width: 28px; height: 28px; }
.vbtn .vt { height: 21px; }
.v2 { width: 32px; margin: 0 2px 0 6px; border: 0; }

.redbox { position: absolute; left: 1193px; top: 348px; width: 211px; height: 932px; border: 4px solid #fe0000; }
```
